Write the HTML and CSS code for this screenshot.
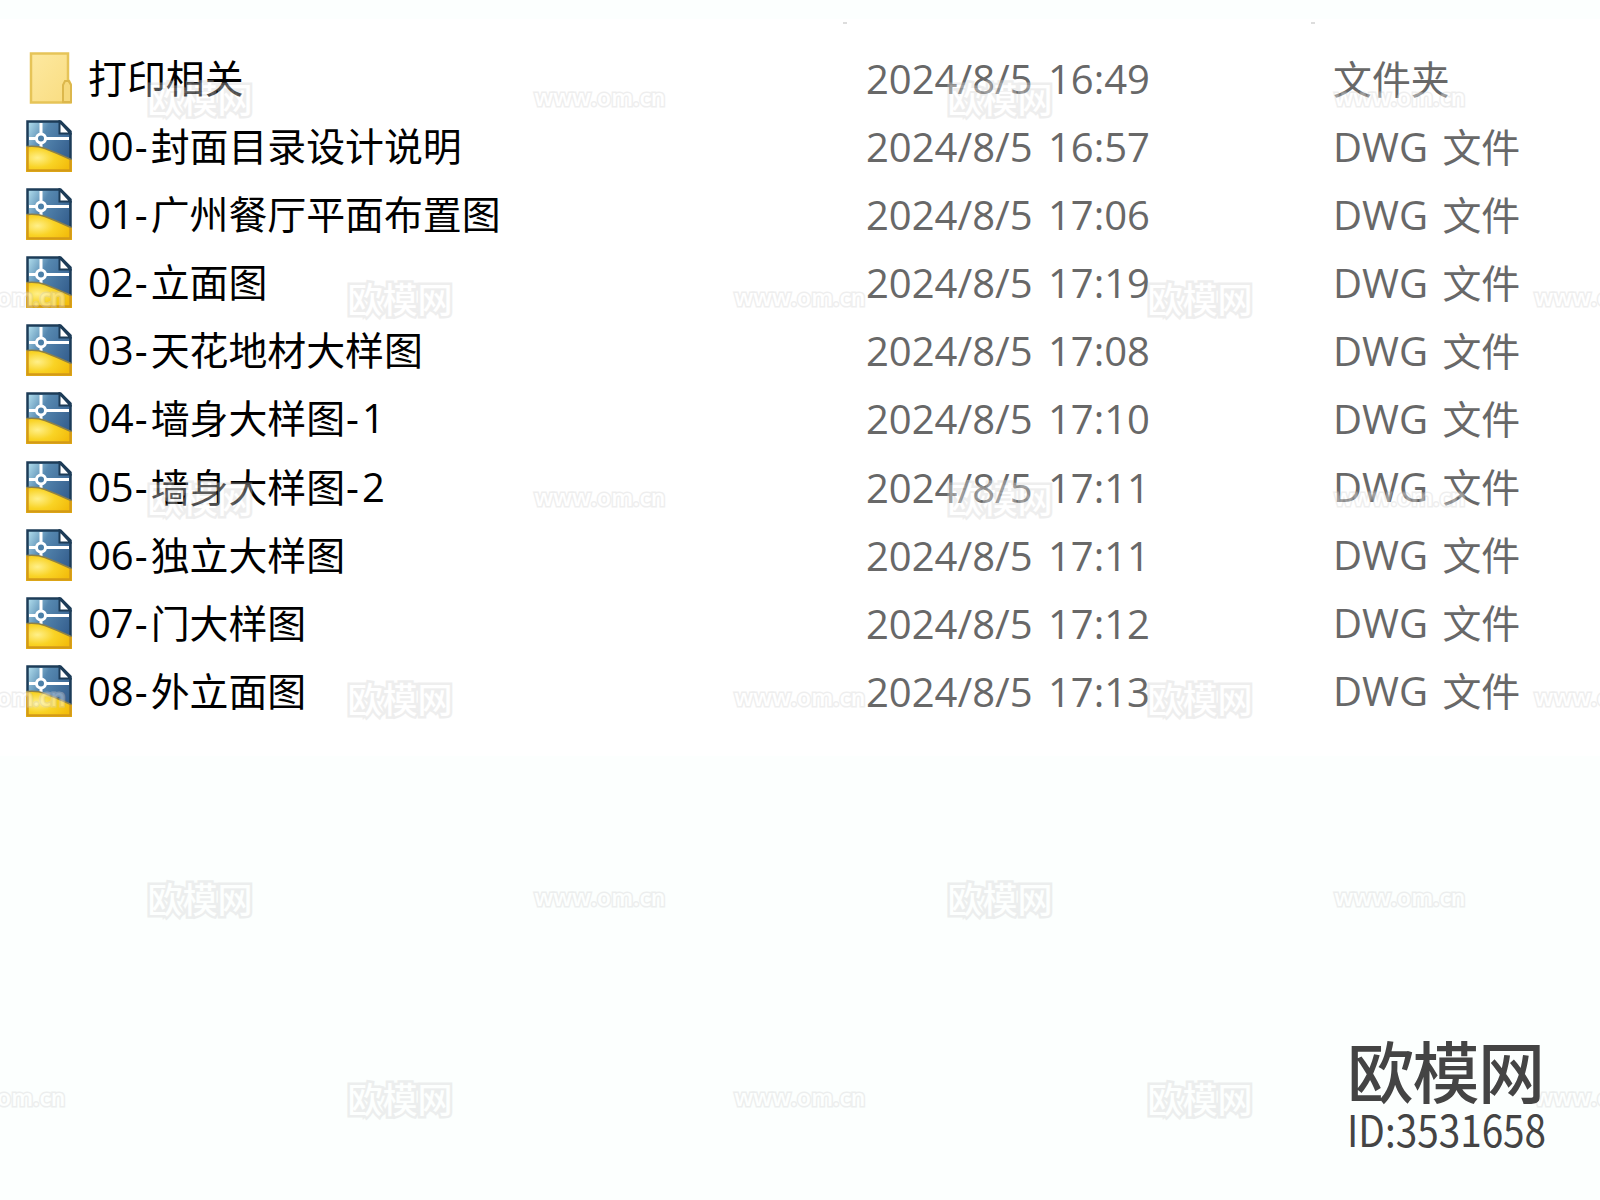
FILE: index.html
```
<!DOCTYPE html>
<html lang="zh-CN">
<head>
<meta charset="utf-8">
<title>文件列表</title>
<link rel="stylesheet" href="styles.css">
<script src="list.js" defer></script>
</head>
<body>
<svg width="0" height="0" class="defs">
  <defs>
    <linearGradient id="gFolder" x1="0" y1="0" x2="1" y2="1"><stop offset="0" stop-color="#fde9a0"/><stop offset="1" stop-color="#f9dc80"/></linearGradient>
    <linearGradient id="gBlue" x1="0" y1="0" x2="1" y2=".6"><stop offset="0" stop-color="#b5e2f0"/><stop offset=".4" stop-color="#5688b0"/><stop offset="1" stop-color="#36608f"/></linearGradient>
    <radialGradient id="gGold" cx=".25" cy=".45" r=".75"><stop offset="0" stop-color="#fff08a"/><stop offset=".5" stop-color="#f9d325"/><stop offset="1" stop-color="#f3bd0c"/></radialGradient>
  </defs>
  <symbol id="folder" viewBox="0 0 46 52">
    <path d="M5 1.500h37v27.500h1l1.500 3v18.500h-39.500z" fill="url(#gFolder)" stroke="#e6c458" stroke-width="2.500"/>
    <path d="M37 50v-17l2-4h3.500l2.500 4v17z" fill="#f6d97c" stroke="#dcb74c" stroke-width="2"/>
  </symbol>
  <symbol id="dwg" viewBox="0 0 46 52">
    <path d="M1.500 1.500h33l10 10v39h-43z" fill="url(#gBlue)" stroke="#1d3c58" stroke-width="2.500"/>
    <path d="M15 3v24M3 18.500h40" stroke="#fff" stroke-width="3" fill="none"/>
    <path d="M0 26.500q10-1 18 1.500 13 5 28 12v12h-46z" fill="url(#gGold)"/>
    <path d="M1.500 27v23.500h43v-11" fill="none" stroke="#d39a18" stroke-width="2.500"/>
    <path d="M1 26.500q10-1 18 2 13 5 26 11" fill="none" stroke="#8d8148" stroke-width="1.500"/>
    <circle cx="15" cy="18.500" r="4.500" fill="#4b7fa8" stroke="#fff" stroke-width="3"/>
    <path d="M33.500 1.500v12h11z" fill="#fff" stroke="#1d3c58" stroke-width="2"/>
  </symbol>
</svg>

<div class="page">
  <div class="header"><i class="tick"></i><i class="tick"></i></div>
  <div class="list" id="list"></div>
  <div class="footer">
    <div class="brand">
      <div class="logo">欧模网</div>
      <div class="id">ID:3531658</div>
    </div>
  </div>
  <div class="marks" id="marks"></div>
</div>
</body>
</html>
```
FILE: styles.css
```
body { margin: 0; background: #fff; font-family: "Open Sans", "Noto Sans CJK SC", sans-serif; }
.defs { position: absolute; }
.page { position: relative; width: 1600px; height: 1200px; overflow: hidden; display: flex; flex-direction: column; }

.header { height: 24px; box-sizing: border-box; background: linear-gradient(#fcfffe 19px, #fff 19px); display: flex; gap: 464px; padding: 22px 0 0 843px; }
.tick { width: 4px; height: 2px; background: #ddd; }

.list { height: 732px; padding-top: 19px; box-sizing: border-box; }
.row { display: grid; grid-template-columns: 62px 778px 467px 1fr; align-items: center; height: 68.1px; padding-left: 26px; font-size: 40px; line-height: 68px; color: #686868; white-space: nowrap; }
.icon { width: 46px; height: 52px; display: block; }
.name { color: #000; }
.date { padding-top: 2px; word-spacing: 5px; }
.type { padding-top: 1px; word-spacing: 4px; }
.cjk { font-family: "Noto Sans CJK SC", sans-serif; font-size: 38.900px; line-height: 1; }
.dash { padding: 0 3px 0 1px; }

.footer { flex: 1; background: #fcfffe; display: flex; justify-content: flex-end; padding: 277px 50px 0 0; }
.brand { position: relative; z-index: 1; width: 202px; color: #444; font-family: "Noto Sans CJK SC", sans-serif; }
.logo { font-size: 67px; line-height: 72px; font-weight: 500; letter-spacing: -1.500px; margin-left: -1px; white-space: nowrap; }
.id { font-size: 43px; line-height: 47px; transform: scaleX(.9); transform-origin: left; margin-left: -1px; white-space: nowrap; }

/* tiled watermark over the whole page */
.marks { position: absolute; left: 0; top: 0; opacity: .36; pointer-events: none; }
.markRow { display: flex; height: 200px; width: 2400px; }
.markRow.shift { margin-left: -200px; }
.mark { width: 400px; text-align: center; color: #fff; -webkit-text-stroke: 5px #d2d2d2; paint-order: stroke fill; }
.markLogo { font: 500 35px/195px "Noto Sans CJK SC", sans-serif; }
.markUrl { font: 600 23px/194px "Open Sans", sans-serif; -webkit-text-stroke-width: 3px; }
```
FILE: list.js
```
var files = [
  ["folder", "打印相关", "16:49"],
  ["dwg", "00-封面目录设计说明", "16:57"],
  ["dwg", "01-广州餐厅平面布置图", "17:06"],
  ["dwg", "02-立面图", "17:19"],
  ["dwg", "03-天花地材大样图", "17:08"],
  ["dwg", "04-墙身大样图-1", "17:10"],
  ["dwg", "05-墙身大样图-2", "17:11"],
  ["dwg", "06-独立大样图", "17:11"],
  ["dwg", "07-门大样图", "17:12"],
  ["dwg", "08-外立面图", "17:13"]
];

function cjk(text) {
  return text.replace(/-/g, '<span class="dash">-</span>')
    .replace(/[\u4e00-\u9fff]+/g, '<span class="cjk">$&</span>');
}

var html = "";
files.forEach(function (f) {
  html += '<div class="row"><svg class="icon"><use href="#' + f[0] + '"/></svg>' +
    '<div class="name">' + cjk(f[1]) + '</div>' +
    '<div class="date">2024/8/5 ' + f[2] + '</div>' +
    '<div class="type">' + cjk(f[0] == "folder" ? "文件夹" : "DWG 文件") + '</div></div>';
});
document.getElementById("list").innerHTML = html;

var logo = '<div class="mark markLogo">欧模网</div>';
var url = '<div class="mark markUrl">www.om.cn</div>';
html = "";
for (var i = 0; i < 6; i++) {
  html += i % 2 ? '<div class="markRow shift">' + url + logo + url + logo + url + '</div>'
                : '<div class="markRow">' + logo + url + logo + url + '</div>';
}
document.getElementById("marks").innerHTML = html;
```
